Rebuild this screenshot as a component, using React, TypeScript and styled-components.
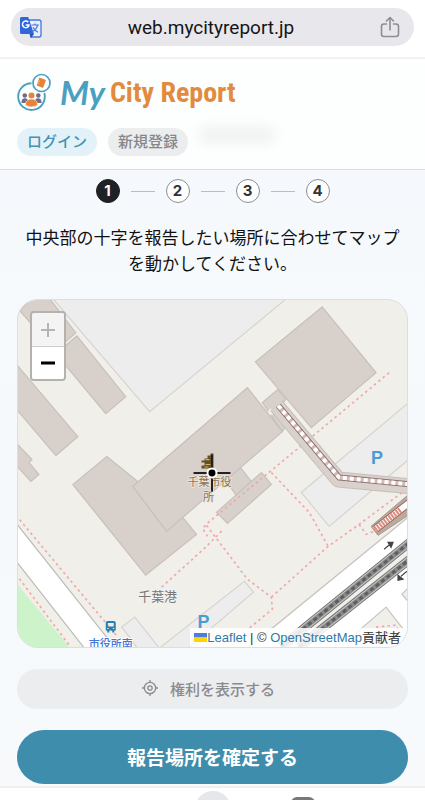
import React from 'react';
import styled, { createGlobalStyle } from 'styled-components';

const GlobalStyle = createGlobalStyle`
  *, *::before, *::after { box-sizing: border-box; }
  body {
    margin: 0;
    background: #f6f9fc;
    color: #111;
    font-family: "Liberation Sans", "Noto Sans CJK JP", sans-serif;
  }
  button, input { font: inherit; }
`;

const Shell = styled.div`
  display: flex;
  flex-direction: column;
  height: 100vh;
  overflow: hidden;
`;

const BrowserBar = styled.div`
  flex: none;
  padding: 8px 11px 11px;
  background: #fff;
  border-bottom: 2px solid #f1f2f4;
`;

const AddressPill = styled.div`
  display: flex;
  align-items: center;
  height: 38px;
  padding: 0 14px 0 8px;
  border-radius: 19px;
  background: #e8e8ec;
`;

const AddressInput = styled.input`
  flex: 1;
  min-width: 0;
  padding: 0;
  border: 0;
  outline: 0;
  background: transparent;
  color: #151517;
  font-family: Roboto, sans-serif;
  font-size: 19px;
  text-align: center;
`;

const IconButton = styled.button`
  display: flex;
  padding: 0;
  border: 0;
  background: none;
`;

const SiteHeader = styled.header`
  flex: none;
  padding: 9px 17px 13px;
  background: #fdfefe;
  border-bottom: 1px solid #d8dfe2;
`;

const Brand = styled.a`
  display: flex;
  align-items: center;
  height: 48px;
  text-decoration: none;
  white-space: nowrap;
`;

const BrandMark = styled.svg`
  flex: none;
  margin-right: 8px;
`;

const BrandScript = styled.span`
  margin-right: 5px;
  color: #4aa0c0;
  font-family: "Z003", "URW Chancery L", Lato, sans-serif;
  font-size: 33px;
  font-style: italic;
  font-weight: 700;
`;

const BrandName = styled.span`
  color: #e28b40;
  font-family: "Liberation Sans Narrow", "Roboto Condensed", Roboto, sans-serif;
  font-size: 28px;
  font-weight: 700;
`;

const AccountRow = styled.div`
  display: flex;
  align-items: center;
  gap: 11px;
  margin-top: 12px;
`;

const AccountButton = styled.button<{ $primary?: boolean }>`
  height: 28px;
  padding: 0 10px;
  border: 0;
  border-radius: 14px;
  background: ${(p) => (p.$primary ? '#e3f2f9' : '#ebedee')};
  color: ${(p) => (p.$primary ? '#4593b1' : '#85878b')};
  font-size: 15px;
  font-weight: 500;
  line-height: 26px;
`;

const HiddenName = styled.span`
  width: 76px;
  height: 16px;
  margin-top: -14px;
  border-radius: 8px;
  background: #f0f1f1;
  filter: blur(6px);
`;

const Main = styled.main`
  flex: none;
  padding: 9px 17px 2px;
  background: linear-gradient(#f5f9fd, #f7f9fb);
`;

const Steps = styled.ol`
  display: flex;
  justify-content: center;
  align-items: center;
  gap: 11px;
  margin: 0;
  padding: 0;
  list-style: none;
`;

const Step = styled.li<{ $active?: boolean }>`
  display: flex;
  align-items: center;
  justify-content: center;
  width: 24px;
  height: 24px;
  border: 1px solid ${(p) => (p.$active ? '#202124' : '#8c8d8f')};
  border-radius: 50%;
  background: ${(p) => (p.$active ? '#202124' : '#fff')};
  color: ${(p) => (p.$active ? '#fff' : '#333')};
  font-family: Inter, sans-serif;
  font-size: 15px;
  font-weight: 700;
  line-height: 22px;
`;

const StepLine = styled.li`
  width: 24px;
  height: 1px;
  background: #b9bcc0;
`;

const Instruction = styled.p`
  margin: 23px 0 21px;
  padding: 0 4px;
  font-size: 17px;
  line-height: 26px;
  text-align: center;
`;

const MapFrame = styled.section`
  position: relative;
  height: 349px;
  overflow: hidden;
  border: 1px solid #dcdfe2;
  border-radius: 21px;
  background: #f1efea;
`;

const MapDrawing = styled.svg`
  display: block;
  width: 100%;
  height: 100%;
`;

const ZoomControl = styled.div`
  position: absolute;
  top: 11px;
  left: 12px;
  display: flex;
  flex-direction: column;
  border: 2px solid #b4b1ae;
  border-radius: 4px;
  overflow: hidden;
`;

const ZoomButton = styled.button`
  display: flex;
  align-items: center;
  justify-content: center;
  width: 32px;
  height: 33px;
  padding: 0;
  border: 0;
  background: #fff;
  color: #000;

  & + & { border-top: 1px solid #ccc; }
  &:disabled { background: #f4f4f4; color: #b5b5b5; }
`;

const Attribution = styled.div`
  position: absolute;
  right: 0;
  bottom: 0;
  display: flex;
  align-items: center;
  height: 19px;
  padding: 0 6px 0 4px;
  background: rgba(255, 255, 255, 0.85);
  color: #333;
  font-size: 13px;
  line-height: 19px;
  white-space: pre;

  a { color: #2f7ba8; text-decoration: none; }
`;

const PillButton = styled.button<{ $primary?: boolean }>`
  display: flex;
  align-items: center;
  justify-content: center;
  gap: 12px;
  width: 100%;
  height: ${(p) => (p.$primary ? '54px' : '40px')};
  margin-top: 21px;
  padding: ${(p) => (p.$primary ? '0 0 2px' : '0 8px 2px 0')};
  border: 0;
  border-radius: 27px;
  background: ${(p) => (p.$primary ? '#3f8dad' : '#ecedee')};
  color: ${(p) => (p.$primary ? '#fff' : '#8a8b90')};
  font-size: ${(p) => (p.$primary ? '19px' : '15px')};
  font-weight: ${(p) => (p.$primary ? 700 : 500)};
  font-family: "Noto Sans CJK JP", sans-serif;
`;

const TabBar = styled.nav`
  display: grid;
  grid-template-columns: 1fr 36px 1fr;
  flex: 1;
  align-items: start;
  min-height: 0;
  overflow: hidden;
  padding-top: 3px;
  border-top: 2px solid #eeeff1;
  background: #fff;
`;

const NewTab = styled.button`
  grid-column: 2;
  width: 36px;
  height: 36px;
  padding: 0;
  border: 0;
  border-radius: 50%;
  background: #e6e7ea;
`;

const TabCount = styled.button`
  width: 24px;
  height: 24px;
  margin: 6px 0 0 60px;
  padding: 0;
  border: 3px solid #77787b;
  border-radius: 6px;
  background: #fff;
`;

const TranslateIcon = () => (
  <svg width="23" height="23" viewBox="0 0 23 23" aria-hidden="true">
    <path d="M10 4h10a2 2 0 0 1 2 2v13a2 2 0 0 1-2 2h-8z" fill="#e9effb" stroke="#4677dc" strokeWidth="1.3" />
    <path d="M2.5 1h6.700L15 18H2.500A1.500 1.500 0 0 1 1 16.500v-14A1.500 1.500 0 0 1 2.500 1z" fill="#2f66dc" />
    <path d="M15 18l-3 4-1.500-4z" fill="#2454b8" />
    <path d="M9.300 6.300A3.300 3.300 0 1 0 10 9H6.700" fill="none" stroke="#fff" strokeWidth="1.500" />
    <path d="M12.500 9h7.500M16 7.500V9M18.600 9c-.5 3-2.400 5-4.400 6.300M14 11.300c1 2 3 4 5 5" fill="none" stroke="#4677dc" strokeWidth="1.200" />
  </svg>
);

const ShareIcon = () => (
  <svg width="20" height="23" viewBox="0 0 20 23" fill="none" stroke="#8e8e92" strokeWidth="1.6" strokeLinecap="round" strokeLinejoin="round" aria-hidden="true">
    <path d="M6.500 8H4a2.500 2.500 0 0 0-2.500 2.500V18A2.500 2.500 0 0 0 4 20.500h12a2.500 2.500 0 0 0 2.500-2.500v-7.500A2.500 2.500 0 0 0 16 8h-2.500" />
    <path d="M10 14V1.500M6.500 5L10 1.500 13.500 5" />
  </svg>
);

const Mark = () => (
  <BrandMark width="35" height="38" viewBox="0 0 35 38" aria-hidden="true">
    <path d="M14.500 10.300A13.300 13.300 0 1 0 27.300 20" fill="none" stroke="#4aa0c0" strokeWidth="1.900" />
    <circle cx="24.500" cy="10" r="8.500" fill="#fff" stroke="#4aa0c0" strokeWidth="1.700" />
    <path d="M22.300 4.500l6.700 2.600-3 8-6.300-2.600z" fill="#e5833b" />
    <path d="M22.600 7.300l-1.500 4" stroke="#f5c39b" strokeWidth=".7" />
    <g fill="#716d82">
      <circle cx="7.800" cy="22.500" r="2.300" />
      <circle cx="21.300" cy="22.500" r="2.300" />
      <path d="M4.500 30v-1.500a3.500 3.500 0 0 1 6.500-1.500v3zM18 30v-3a3.500 3.500 0 0 1 6.500 1.500V30z" />
    </g>
    <circle cx="14.500" cy="22.500" r="3" fill="#e5833b" />
    <path d="M8.500 32.500V31a6 5 0 0 1 12 0v1.500q-6 3-12 0z" fill="#e5833b" stroke="#fff" strokeWidth=".6" />
  </BrandMark>
);

const TargetIcon = () => (
  <svg width="16" height="16" viewBox="0 0 17 17" fill="none" stroke="currentColor" strokeWidth="1.400" aria-hidden="true">
    <circle cx="8.500" cy="8.500" r="6" />
    <circle cx="8.500" cy="8.500" r="2.300" />
    <path d="M8.500 0v3M8.500 14v3M0 8.500h3M14 8.500h3" />
  </svg>
);

const buildings = [
  '76,333 55,351 20,311 30,299 50,299',
  '77,336 126,397 106,414 56,354',
  '10,357 78,437 56,456 10,402',
  '10,437 32,460 29,463 39,475 31,482 10,459',
  '107,457 184,519 197,535 146,576 73,485',
  '226,480 241,468 252,482 238,498',
  '262,473 272,485 228,524 217,513',
  '278,390 287,399 281,406 290,420 283,432 263,403',
  '133,487 248,388 283,432 167,532',
  '323,307 377,373 312,428 256,362',
];

const paved = [
  '48,293 150,412 294,293',
  '412,401 302,493 330,527 412,458',
  '245,582 254,593 185,652 156,652',
  '135,618 122,628 140,652 162,652',
];

const footpaths = [
  'M390 373L272 471L210 522L203 529L208 537M272 473L310 513L329 547',
  'M162 588L206 548L224 530M207 526L248 580L272 598L273 610L250 629',
  'M272 598L329 547L360 525L410 488M360 525L367 535L375 532L410 503',
  'M16 516L118 638M16 575L70 647',
];

const railways = ['M282 648L306 628L412 542', 'M300 648L325 628L412 559'];

const CityMap = () => (
  <MapDrawing viewBox="18 300 390 348" preserveAspectRatio="xMidYMid slice" role="img" aria-label="千葉市役所周辺の地図">
    <g fill="#ededed" stroke="#d5d4d0" strokeWidth="1.200">
      {paved.map((points) => <polygon key={points} points={points} />)}
    </g>
    <g fill="#d7d0cb" stroke="#c8c0ba" strokeWidth="1.200">
      {buildings.map((points) => <polygon key={points} points={points} />)}
    </g>
    <circle cx="272" cy="412" r="3" fill="#f1efea" />

    <path d="M10 576L76 656H10z" fill="#cdf3ca" />
    <path d="M10 516L121 656H90L10 554z" fill="#fff" stroke="#bcbcb8" strokeWidth="1.200" />
    <path d="M415 513L240 656H415z" fill="#fff" stroke="#c6c5c1" strokeWidth="1.200" />
    <path d="M291 648L316 628L412 550" fill="none" stroke="#f1efea" strokeWidth="8" />
    <path d="M387 608L350 640V652H412V640zM412 586L403 595L412 606z" fill="#f1efea" stroke="#c6c5c1" strokeWidth="1.200" />

    {railways.map((d) => (
      <g key={d} fill="none">
        <path d={d} stroke="#777" strokeWidth="9" />
        <path d={d} stroke="#c9c9c7" strokeWidth="7" />
        <path d={d} stroke="#8a8a8a" strokeWidth="5" />
        <path d={d} stroke="#5c5e61" strokeWidth="3" strokeDasharray="4 3" />
      </g>
    ))}

    <g fill="none" stroke="#f0a9a7" strokeWidth="1.700" strokeDasharray="2.500 3.200">
      {footpaths.map((d) => <path key={d} d={d} />)}
      <path d="M377 628L397 626L401 634" />
    </g>

    <g fill="none" strokeLinejoin="round">
      <path d="M277 406L339 480L412 487" stroke="#c8beb7" strokeWidth="16" />
      <path d="M277 406L339 480L412 487" stroke="#d9d1cb" strokeWidth="14" />
      <path d="M279 406L340 478L412 485" stroke="#8b7373" strokeWidth="6" />
      <path d="M279 406L340 478L412 485" stroke="#d9b9b6" strokeWidth="4" />
      <path d="M279 406L340 478L412 485" stroke="#fff" strokeWidth="4" strokeDasharray="4 3" />
    </g>
    <path d="M372 527L412 493V514L379 536z" fill="#bbaa9d" stroke="#a49589" />
    <path d="M376 530L412 502" stroke="#8a6b66" strokeWidth="8" />
    <path d="M376 530L412 502" stroke="#fff" strokeWidth="6" />
    <path d="M376 530L402 510" stroke="#e28b7d" strokeWidth="6" strokeDasharray="2 1" />

    <g stroke="#444" strokeWidth="1.200" fill="#444">
      <path d="M385 550L391 545M389 543L394 543L392 548z" />
      <path d="M408 572L402 577M399 576L399 581L404 580z" />
    </g>

    <g fontFamily="'Noto Sans CJK JP', sans-serif" textAnchor="middle" strokeLinejoin="round" paintOrder="stroke">
      <g fill="#8a734f" stroke="#eae4dd" strokeWidth="2" fontSize="11">
        <text x="210" y="487">千葉市役</text>
        <text x="209" y="502">所</text>
      </g>
      <text x="158" y="602" fill="#777" stroke="#f4f2ee" strokeWidth="2" fontSize="13">千葉港</text>
      <text x="111" y="649" fill="#4274dc" stroke="#fff" strokeWidth="2" fontSize="11" fontWeight="500">市役所南</text>
    </g>
    <g fill="#4b9bd5" fontFamily="'Liberation Sans', sans-serif" fontSize="18" fontWeight="700" textAnchor="middle">
      <text x="378" y="464">P</text>
      <text x="204" y="629">P</text>
    </g>

    <path fill="#237fb1" fillRule="evenodd" d="M108 622h6q2 0 2 2v7.500h-1.500v2h-2v-2h-3v2h-2v-2H106V624q0-2 2-2zM108 624v3.500h6V624zM107.500 629v1h1.500v-1zM113 629v1h1.500v-1z" />
    <path fill="#65501f" d="M205 459H208V456H211V454H214V469H202V466H205V463H202V461H205z" />
    <path d="M206 460h4M206 465h5M205 467.500h4" stroke="#cdb06c" strokeWidth="1.200" />

    <path d="M194 473.500H208M217 473.500H231M212.500 455V469M212.500 478V492" stroke="#222" strokeWidth="2" />
    <circle cx="212.500" cy="473.500" r="5.500" fill="#fff" />
    <circle cx="212.500" cy="473.500" r="3.500" fill="#000" />
  </MapDrawing>
);

const steps = [1, 2, 3, 4];

export default function App() {
  return (
    <Shell>
      <GlobalStyle />
      <BrowserBar>
        <AddressPill>
          <IconButton type="button" aria-label="翻訳"><TranslateIcon /></IconButton>
          <AddressInput aria-label="アドレス" defaultValue="web.mycityreport.jp" />
          <IconButton type="button" aria-label="共有"><ShareIcon /></IconButton>
        </AddressPill>
      </BrowserBar>

      <SiteHeader>
        <Brand href="#">
          <Mark />
          <BrandScript>My</BrandScript>
          <BrandName>City Report</BrandName>
        </Brand>
        <AccountRow>
          <AccountButton type="button" $primary>ログイン</AccountButton>
          <AccountButton type="button">新規登録</AccountButton>
          <HiddenName />
        </AccountRow>
      </SiteHeader>

      <Main>
        <Steps>
          {steps.map((n) => (
            <React.Fragment key={n}>
              {n > 1 && <StepLine aria-hidden="true" />}
              <Step $active={n === 1} aria-current={n === 1 ? 'step' : undefined}>{n}</Step>
            </React.Fragment>
          ))}
        </Steps>
        <Instruction>中央部の十字を報告したい場所に合わせてマップを動かしてください。</Instruction>

        <MapFrame>
          <CityMap />
          <ZoomControl>
            <ZoomButton type="button" aria-label="拡大" disabled>
              <svg width="14" height="14" viewBox="0 0 14 14" stroke="currentColor" strokeWidth="2"><path d="M0 7h14M7 0v14" /></svg>
            </ZoomButton>
            <ZoomButton type="button" aria-label="縮小">
              <svg width="14" height="14" viewBox="0 0 14 14" stroke="currentColor" strokeWidth="3"><path d="M0 7h14" /></svg>
            </ZoomButton>
          </ZoomControl>
          <Attribution>
            <svg width="13" height="9" viewBox="0 0 13 9" aria-hidden="true">
              <path fill="#4c7be1" d="M0 0h13v4.500H0z" />
              <path fill="#ffd500" d="M0 4.500h13V9H0z" />
            </svg>
            <a href="#leaflet">Leaflet</a>{' | © '}<a href="#osm">OpenStreetMap</a>貢献者
          </Attribution>
        </MapFrame>

        <PillButton type="button"><TargetIcon />権利を表示する</PillButton>
        <PillButton type="button" $primary>報告場所を確定する</PillButton>
      </Main>

      <TabBar>
        <NewTab type="button" aria-label="新しいタブ" />
        <TabCount type="button" aria-label="タブ一覧" />
      </TabBar>
    </Shell>
  );
}
